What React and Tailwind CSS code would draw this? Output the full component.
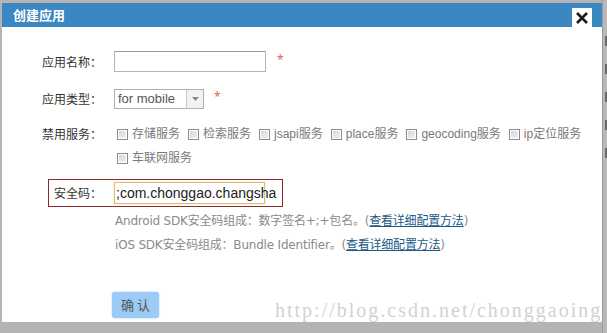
const cjk = "font-['Noto_Sans_CJK_SC',sans-serif]";

const Checkbox = ({ label }) => (
  <span className="flex items-center mr-[8px]">
    <span className="w-[11px] h-[11px] border border-[#8c8c8c] bg-gradient-to-br from-[#d4d4d4] to-[#f4f4f4] shadow-[inset_0_0_0_1px_#ffffff] mr-[4px]" />
    <span className="text-[12px] text-[#7a7a7a] font-['Liberation_Sans','Noto_Sans_CJK_SC',sans-serif]">{label}</span>
  </span>
);

const Label = ({ children, w = "w-[60px]" }) => (
  <div className={`${w} text-right text-[12px] text-[#333] mr-[12px] shrink-0 ${cjk}`}>{children}</div>
);

const Star = () => <span className="text-[12px] text-[#e06060] leading-none -mt-[4px]">*</span>;

const Link = ({ children }) => (
  <span className="text-[#1d5a86] underline">{children}</span>
);

export default function App() {
  return (
    <div className="w-[607px] h-[333px] bg-[#b4b4b4] flex overflow-hidden">
      <div className="w-[2px] shrink-0" />
      <div className="relative w-[600px] h-[319px] mt-[3px] bg-white flex flex-col shrink-0">
        <div className="h-[24px] bg-[#3a87c1] flex justify-between items-center pl-[11px] pr-[10px]">
          <span className={`text-white font-bold text-[13px] ${cjk}`}>创建应用</span>
          <span className="self-end w-[20px] h-[19px] bg-white flex items-center justify-center">
            <svg width="14" height="14" viewBox="0 0 14 14">
              <path d="M2 2 L12 12 M12 2 L2 12" stroke="#1a1a1a" strokeWidth="2.6" />
            </svg>
          </span>
        </div>

        <div className="flex flex-col pl-[40px] pt-[24px]">
          <div className="flex items-center h-[21px]">
            <Label>应用名称：</Label>
            <div className="w-[152px] h-[21px] border border-[#b4b4b4] border-t-[#9a9a9a] bg-white mr-[11px]" />
            <Star />
          </div>

          <div className="flex items-center h-[20px] mt-[17px]">
            <Label>应用类型：</Label>
            <div className="w-[90px] h-[20px] border border-[#a9b0b8] flex items-center mr-[10px]">
              <span className="flex-1 pl-[3px] text-[13px] text-[#555] font-['Liberation_Sans',sans-serif]">for mobile</span>
              <span className="w-[17px] h-full border-l border-[#c8c8c8] bg-[#f2f2f2] flex items-center justify-center">
                <svg width="7" height="4" viewBox="0 0 7 4">
                  <path d="M0 0 L7 0 L3.5 4 Z" fill="#8a8a8a" />
                </svg>
              </span>
            </div>
            <Star />
          </div>

          <div className="flex mt-[13px]">
            <div className="h-[24px] flex items-center">
              <Label>禁用服务：</Label>
            </div>
            <div className="flex flex-col pl-[3px]">
              <div className="flex items-center h-[24px]">
                <Checkbox label="存储服务" />
                <Checkbox label="检索服务" />
                <Checkbox label="jsapi服务" />
                <Checkbox label="place服务" />
                <Checkbox label="geocoding服务" />
                <Checkbox label="ip定位服务" />
              </div>
              <div className="flex items-center h-[24px]">
                <Checkbox label="车联网服务" />
              </div>
            </div>
          </div>

          <div className="ml-[6px] mt-[9px] w-[235px] h-[28px] border border-[#8e2a2a] flex items-center">
            <Label w="w-[53px]">安全码：</Label>
            <div className="w-[151px] h-[22px] border border-[#d9bd7f] shadow-[0_0_2px_#f0d9a6] flex items-center pl-[1px] text-[14px] text-[#222] font-['Liberation_Sans',sans-serif]">
              ;com.chonggao.changsha
              <span className="w-[1px] h-[16px] bg-[#111] ml-[1px]" />
            </div>
          </div>

          <div className="mt-[6px] ml-[73px] h-[16px] flex items-center text-[12px] text-[#8a8a8a] font-['DejaVu_Sans','Noto_Sans_CJK_SC',sans-serif] tracking-[-0.2px]">
            <span>Android SDK</span>
            <span>安全码组成：数字签名</span>
            <span>+;+</span>
            <span>包名。(<Link>查看详细配置方法</Link>)</span>
          </div>
          <div className="mt-[8px] ml-[73px] h-[16px] flex items-center text-[12px] text-[#8a8a8a] font-['DejaVu_Sans','Noto_Sans_CJK_SC',sans-serif] tracking-[-0.2px]">
            <span>iOS SDK</span>
            <span>安全码组成：</span>
            <span>Bundle Identifier</span>
            <span>。(<Link>查看详细配置方法</Link>)</span>
          </div>

          <div className="mt-[39px] ml-[70px]">
            <button className={`w-[47px] h-[26px] rounded-[3px] bg-[#9ccbf6] shadow-[0_0_2px_#9ccbf6] text-[13px] text-[#555] ${cjk}`}>
              确 认
            </button>
          </div>
        </div>

        <div className="absolute left-[273px] top-[297px] text-[20px] leading-none text-[#d2d2d2] tracking-[2px] font-['Liberation_Serif',serif]">
          http://blog.csdn.net/chonggaoing
        </div>
      </div>
      <div className="flex-1 border-l border-[#9a9a9a] bg-[#b8b8b8] flex flex-col overflow-hidden pt-[36px] gap-[18px] pl-[2px]">
        <span className="w-[3px] h-[10px] bg-[#6a6a6a]" />
        <span className="w-[3px] h-[10px] bg-[#6a6a6a]" />
        <span className="w-[3px] h-[10px] bg-[#6a6a6a]" />
        <span className="w-[3px] h-[10px] bg-[#6a6a6a]" />
        <span className="w-[3px] h-[10px] bg-[#6a6a6a]" />
      </div>
    </div>
  );
}
